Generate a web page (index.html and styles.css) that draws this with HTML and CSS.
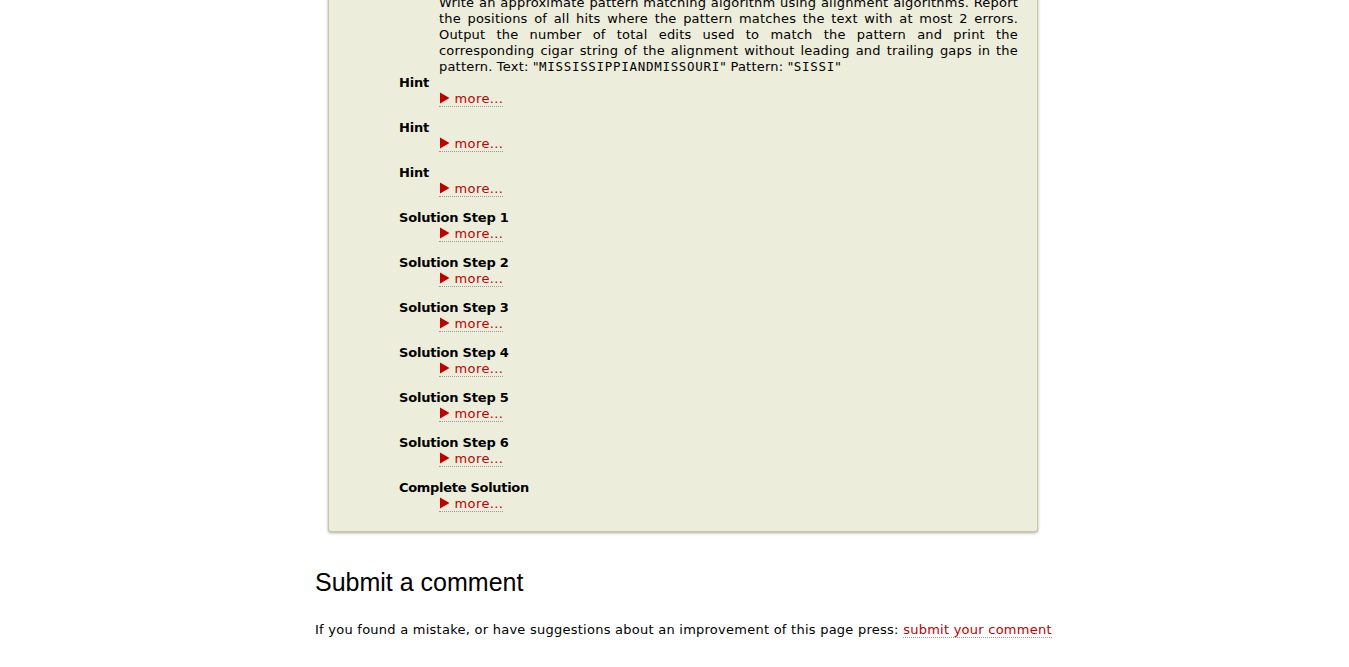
FILE: index.html
```html
<!DOCTYPE html>
<html>
<head>
<meta charset="utf-8">
<link rel="stylesheet" href="styles.css">
</head>
<body>
<div class="page">
  <div class="exercise">
    <dl class="steps">
      <dd class="task">Write an approximate pattern matching algorithm using alignment algorithms. Report the positions of all hits where the pattern matches the text with at most 2 errors. Output the number of total edits used to match the pattern and print the corresponding cigar string of the alignment without leading and trailing gaps in the pattern. Text: "<code>MISSISSIPPIANDMISSOURI</code>" Pattern: "<code>SISSI</code>"</dd>
      <dt>Hint</dt>
      <dd><a class="more" href="#"><svg class="tri" width="11" height="12" viewBox="0 0 11 12"><path d="M1 0.5 L10.5 6 L1 11.5 Z" fill="#c00000"/></svg> more...</a></dd>
      <dt>Hint</dt>
      <dd><a class="more" href="#"><svg class="tri" width="11" height="12" viewBox="0 0 11 12"><path d="M1 0.5 L10.5 6 L1 11.5 Z" fill="#c00000"/></svg> more...</a></dd>
      <dt>Hint</dt>
      <dd><a class="more" href="#"><svg class="tri" width="11" height="12" viewBox="0 0 11 12"><path d="M1 0.5 L10.5 6 L1 11.5 Z" fill="#c00000"/></svg> more...</a></dd>
      <dt>Solution Step 1</dt>
      <dd><a class="more" href="#"><svg class="tri" width="11" height="12" viewBox="0 0 11 12"><path d="M1 0.5 L10.5 6 L1 11.5 Z" fill="#c00000"/></svg> more...</a></dd>
      <dt>Solution Step 2</dt>
      <dd><a class="more" href="#"><svg class="tri" width="11" height="12" viewBox="0 0 11 12"><path d="M1 0.5 L10.5 6 L1 11.5 Z" fill="#c00000"/></svg> more...</a></dd>
      <dt>Solution Step 3</dt>
      <dd><a class="more" href="#"><svg class="tri" width="11" height="12" viewBox="0 0 11 12"><path d="M1 0.5 L10.5 6 L1 11.5 Z" fill="#c00000"/></svg> more...</a></dd>
      <dt>Solution Step 4</dt>
      <dd><a class="more" href="#"><svg class="tri" width="11" height="12" viewBox="0 0 11 12"><path d="M1 0.5 L10.5 6 L1 11.5 Z" fill="#c00000"/></svg> more...</a></dd>
      <dt>Solution Step 5</dt>
      <dd><a class="more" href="#"><svg class="tri" width="11" height="12" viewBox="0 0 11 12"><path d="M1 0.5 L10.5 6 L1 11.5 Z" fill="#c00000"/></svg> more...</a></dd>
      <dt>Solution Step 6</dt>
      <dd><a class="more" href="#"><svg class="tri" width="11" height="12" viewBox="0 0 11 12"><path d="M1 0.5 L10.5 6 L1 11.5 Z" fill="#c00000"/></svg> more...</a></dd>
      <dt class="complete">Complete Solution</dt>
      <dd class="last"><a class="more" href="#"><svg class="tri" width="11" height="12" viewBox="0 0 11 12"><path d="M1 0.5 L10.5 6 L1 11.5 Z" fill="#c00000"/></svg> more...</a></dd>
    </dl>
  </div>
  <h2 class="comment-title">Submit a comment</h2>
  <p class="comment-text">If you found a mistake, or have suggestions about an improvement of this page press: <a class="link" href="#">submit your comment</a></p>
</div>
</body>
</html>
```
FILE: styles.css
```css
html, body {
  margin: 0;
  padding: 0;
  background: #ffffff;
}
body {
  font-family: "DejaVu Sans", Verdana, sans-serif;
  font-size: 13px;
  color: #000;
}
.page {
  width: 740px;
  margin: -13px 0 0 315px;
}
.exercise {
  margin-left: 13px;
  width: 710px;
  box-sizing: border-box;
  background: #ededdc;
  border: 1px solid #c9c99a;
  border-top: none;
  box-shadow: 0 1px 3px rgba(0, 0, 0, 0.35);
  padding: 8px 19px 19px 70px;
  border-radius: 0 0 3px 3px;
}
.steps {
  margin: 0;
}
.steps dt {
  font-weight: bold;
  font-size: 13px;
  line-height: 16px;
  letter-spacing: -0.2px;
}
.steps dd {
  margin: 0 0 13px 40px;
  line-height: 16px;
  font-size: 13px;
}
.steps dd.task {
  font-size: 13px;
  letter-spacing: 0.2px;
  line-height: 16px;
  text-align: justify;
  margin-bottom: 0;
}
.steps dd.last {
  margin-bottom: 0;
}
.steps dt.complete {
  letter-spacing: -0.3px;
}
code {
  font-family: "DejaVu Sans Mono", monospace;
  font-size: 12.5px;
  line-height: 1;
  letter-spacing: 0.7px;
}
.more {
  color: #c00000;
  text-decoration: none;
  border-bottom: 1px dotted #999;
  letter-spacing: 0.4px;
}
.tri {
  display: inline-block;
  vertical-align: -1px;
}
.comment-title {
  font-family: "Liberation Sans", Arial, sans-serif;
  font-weight: normal;
  font-size: 25px;
  margin: 36px 0 0 0;
  line-height: 28px;
}
.comment-text {
  margin: 26px 0 0 0;
  font-size: 13px;
  letter-spacing: 0.25px;
  line-height: 16px;
}
.link {
  color: #c00000;
  text-decoration: none;
  border-bottom: 1px dotted #999;
}
```
